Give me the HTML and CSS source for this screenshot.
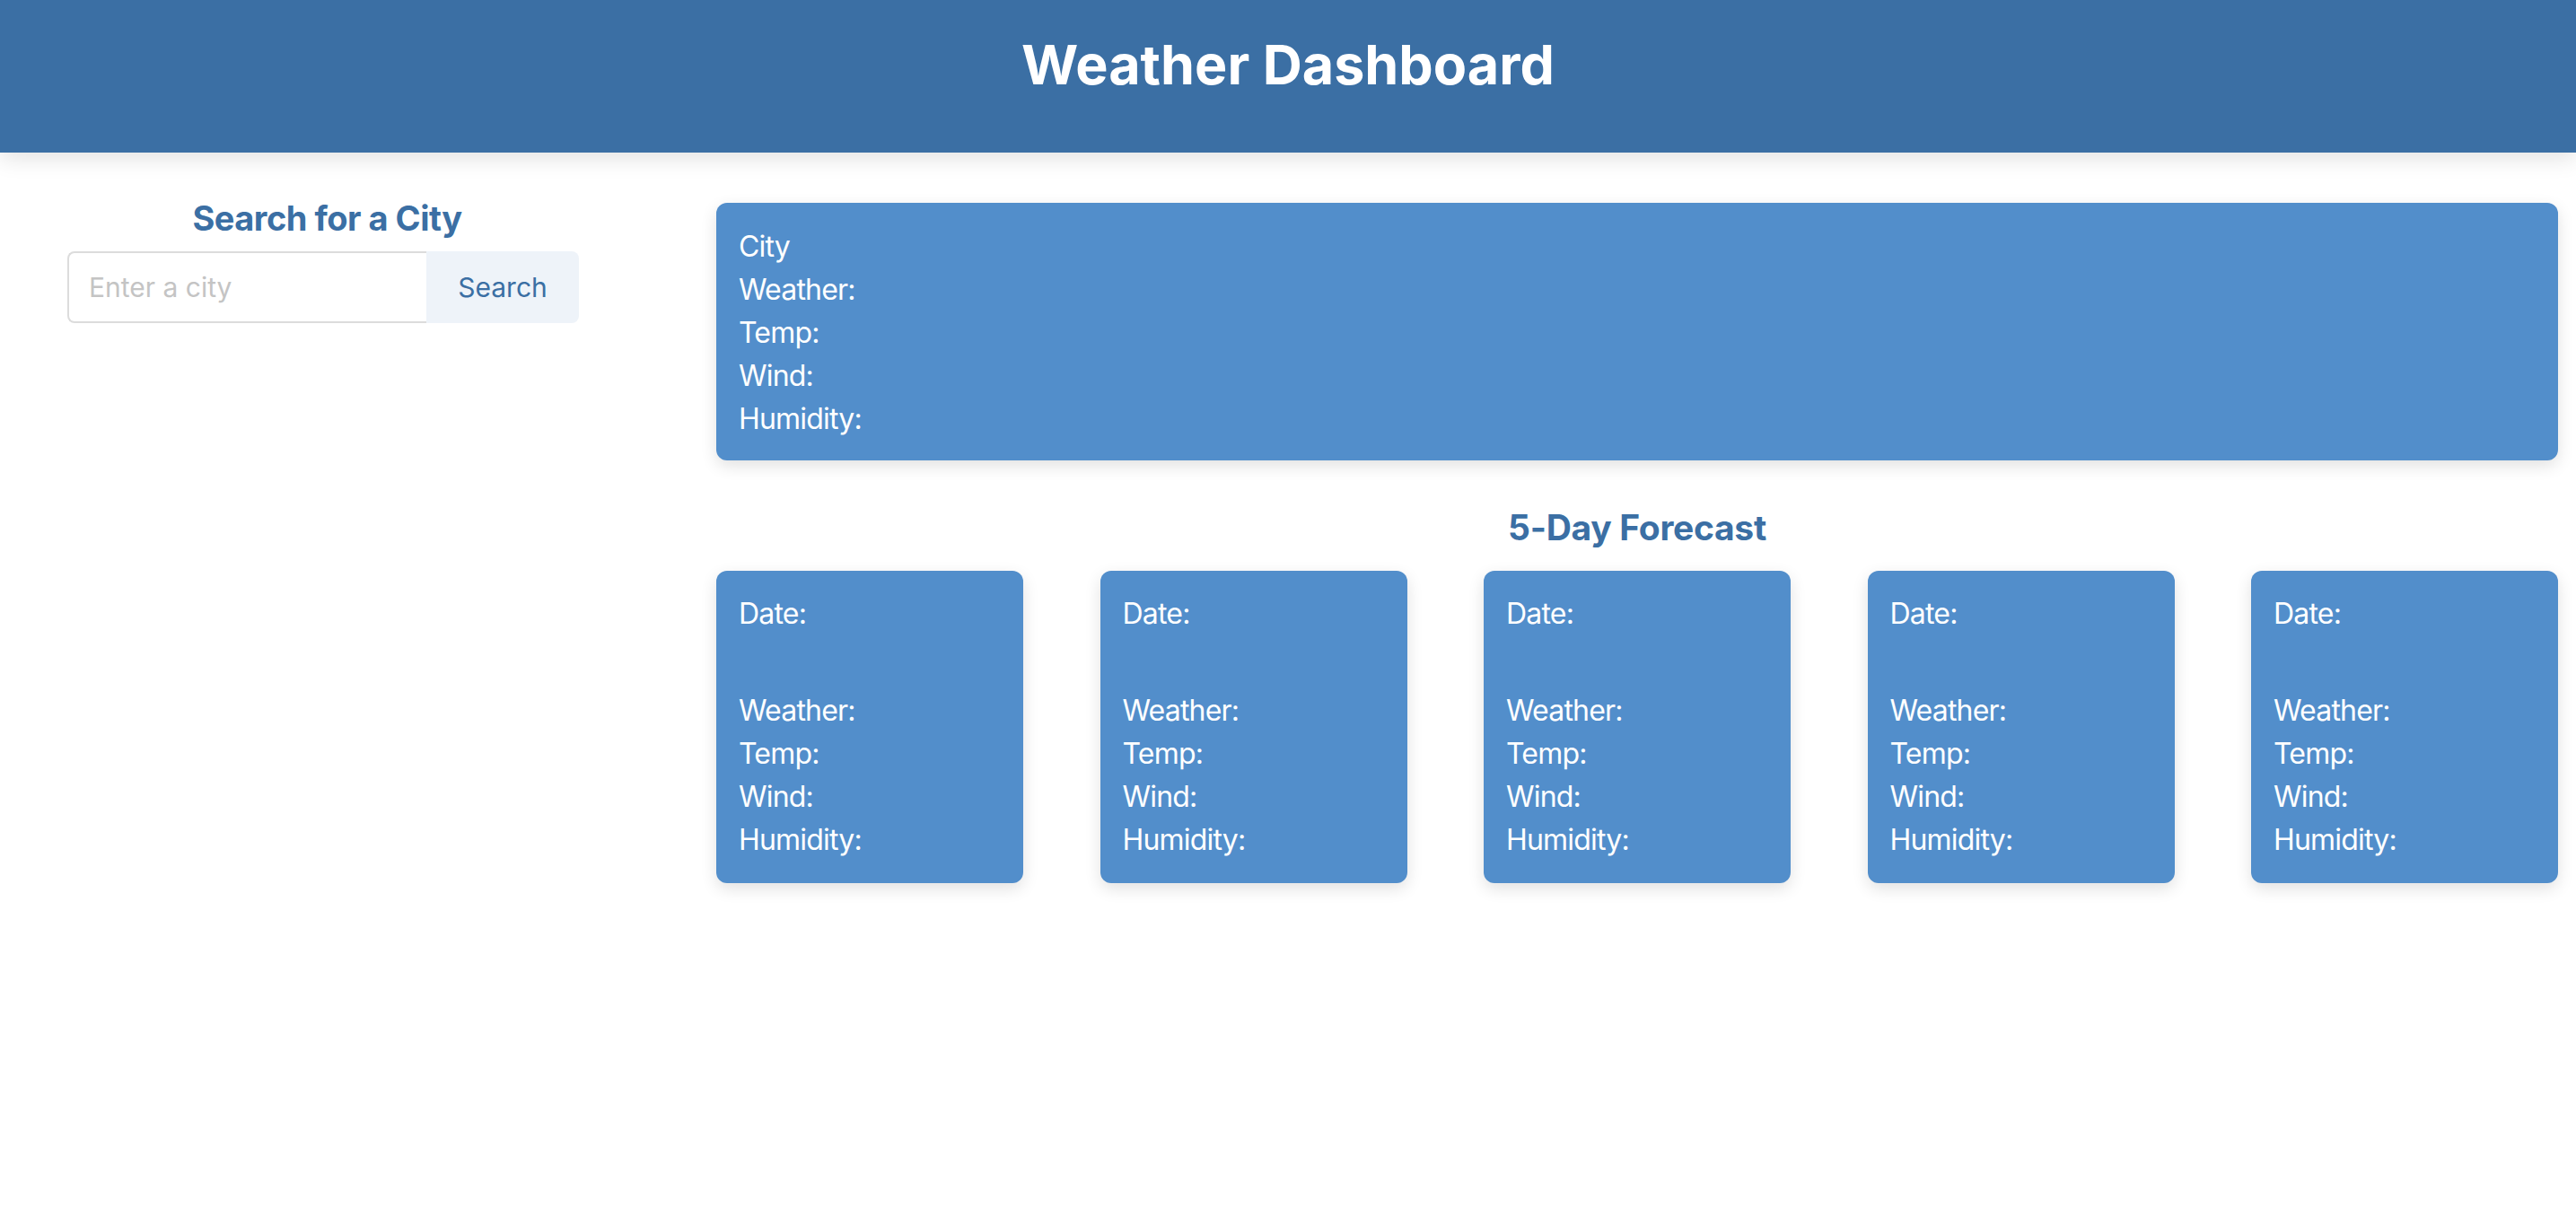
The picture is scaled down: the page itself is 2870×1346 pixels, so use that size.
FILE: index.html
```html
<!DOCTYPE html>
<html lang="en">
<head>
<meta charset="utf-8">
<title>Weather Dashboard</title>
<link rel="stylesheet" href="styles.css">
</head>
<body>
<header class="topbar">
  <h1 class="title">Weather Dashboard</h1>
</header>
<div class="layout">
  <aside class="sidebar">
    <h2 class="section-title search-title">Search for a City</h2>
    <form class="search" onsubmit="return false;">
      <input class="search-input" type="text" placeholder="Enter a city">
      <button class="search-btn" type="submit">Search</button>
    </form>
  </aside>
  <main class="content">
    <section class="current card">
      <div class="line">City</div>
      <div class="line">Weather:</div>
      <div class="line">Temp:</div>
      <div class="line">Wind:</div>
      <div class="line">Humidity:</div>
    </section>
    <h2 class="section-title forecast-title">5-Day Forecast</h2>
    <div class="forecast">
      <div class="card day">
        <div class="line">Date:</div>
        <div class="icon-slot"></div>
        <div class="line">Weather:</div>
        <div class="line">Temp:</div>
        <div class="line">Wind:</div>
        <div class="line">Humidity:</div>
      </div>
      <div class="card day">
        <div class="line">Date:</div>
        <div class="icon-slot"></div>
        <div class="line">Weather:</div>
        <div class="line">Temp:</div>
        <div class="line">Wind:</div>
        <div class="line">Humidity:</div>
      </div>
      <div class="card day">
        <div class="line">Date:</div>
        <div class="icon-slot"></div>
        <div class="line">Weather:</div>
        <div class="line">Temp:</div>
        <div class="line">Wind:</div>
        <div class="line">Humidity:</div>
      </div>
      <div class="card day">
        <div class="line">Date:</div>
        <div class="icon-slot"></div>
        <div class="line">Weather:</div>
        <div class="line">Temp:</div>
        <div class="line">Wind:</div>
        <div class="line">Humidity:</div>
      </div>
      <div class="card day">
        <div class="line">Date:</div>
        <div class="icon-slot"></div>
        <div class="line">Weather:</div>
        <div class="line">Temp:</div>
        <div class="line">Wind:</div>
        <div class="line">Humidity:</div>
      </div>
    </div>
  </main>
</div>
</body>
</html>
```
FILE: styles.css
```css
* {
  box-sizing: border-box;
}

html, body {
  margin: 0;
  padding: 0;
  background: #ffffff;
  font-family: Inter, "Noto Sans", "Liberation Sans", sans-serif;
}

.topbar {
  height: 170px;
  background: #3b6fa4;
  box-shadow: 0 6px 24px rgba(0, 0, 0, 0.12);
  padding-top: 35px;
  text-align: center;
  position: relative;
  z-index: 1;
}

.title {
  margin: 0;
  color: #ffffff;
  font-size: 61px;
  font-weight: 700;
  line-height: normal;
}

.layout {
  display: grid;
  grid-template-columns: 680px 1fr;
  column-gap: 98px;
  padding: 56px 20px 40px 20px;
}

.sidebar {
  display: flex;
  flex-direction: column;
  align-items: center;
}

.section-title {
  margin: 0;
  color: #3b6fa4;
  font-size: 38px;
  font-weight: 700;
  line-height: 34px;
  letter-spacing: -0.5px;
  text-align: center;
}

.search-title {
  padding-left: 9px;
}

.search {
  display: flex;
  margin-top: 20px;
  width: 570px;
}

.search-input {
  flex: 1;
  height: 80px;
  border: 2px solid #dcdcdc;
  border-right: none;
  border-radius: 8px 0 0 8px;
  padding: 0 22px;
  font-family: inherit;
  font-size: 30px;
  color: #333;
  outline: none;
  min-width: 0;
}

.search-input::placeholder {
  color: #c4c4c4;
}

.search-btn {
  width: 170px;
  height: 80px;
  border: none;
  border-radius: 0 8px 8px 0;
  background: #eef3f9;
  color: #3b6fa4;
  font-family: inherit;
  font-size: 30px;
  font-weight: 400;
  padding: 0;
}

.content {
  display: flex;
  flex-direction: column;
}

.card {
  background: #528ecb;
  color: #ffffff;
  border-radius: 12px;
  box-shadow: 0 6px 18px rgba(0, 0, 0, 0.12);
  font-size: 32px;
  line-height: 48px;
  letter-spacing: -0.8px;
}

.current {
  padding: 25px 25px 22px 25px;
}

.forecast-title {
  font-size: 39px;
  letter-spacing: -0.3px;
  margin-top: 58px;
  margin-bottom: 31px;
}

.forecast {
  display: flex;
  justify-content: space-between;
}

.day {
  width: calc(100% / 6);
  padding: 24px 25px;
}

.icon-slot {
  height: 60px;
}
```
